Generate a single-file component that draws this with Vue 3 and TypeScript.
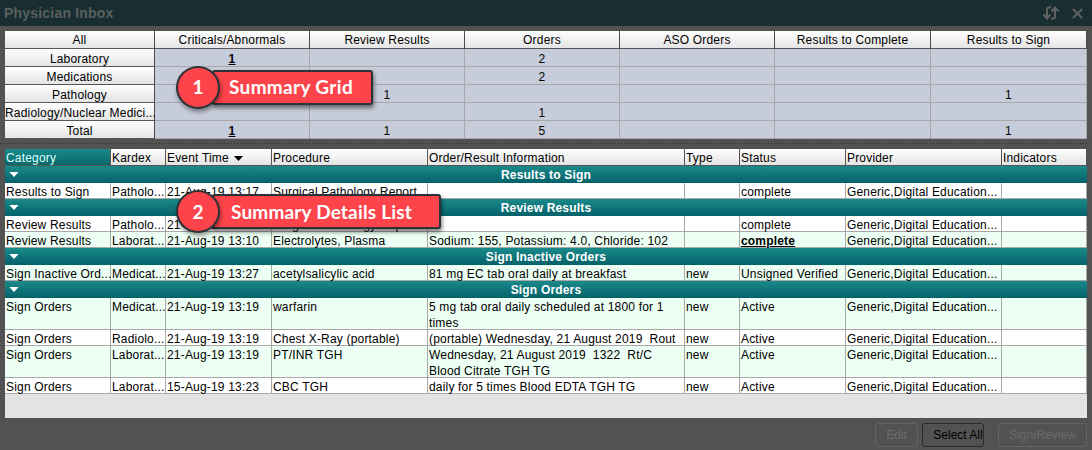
<script setup lang="ts">
interface Cell { text: string; strong?: boolean }
const summaryCols = ['Criticals/Abnormals', 'Review Results', 'Orders', 'ASO Orders', 'Results to Complete', 'Results to Sign']
const summaryRows: { label: string; cells: Cell[] }[] = [
  { label: 'Laboratory', cells: [{ text: '1', strong: true }, { text: '' }, { text: '2' }, { text: '' }, { text: '' }, { text: '' }] },
  { label: 'Medications', cells: [{ text: '' }, { text: '' }, { text: '2' }, { text: '' }, { text: '' }, { text: '' }] },
  { label: 'Pathology', cells: [{ text: '' }, { text: '1' }, { text: '' }, { text: '' }, { text: '' }, { text: '1' }] },
  { label: 'Radiology/Nuclear Medici...', cells: [{ text: '' }, { text: '' }, { text: '1' }, { text: '' }, { text: '' }, { text: '' }] },
  { label: 'Total', cells: [{ text: '1', strong: true }, { text: '1' }, { text: '5' }, { text: '' }, { text: '' }, { text: '1' }] },
]
const listCols = ['Category', 'Kardex', 'Event Time', 'Procedure', 'Order/Result Information', 'Type', 'Status', 'Provider', 'Indicators']
const gen = 'Generic,Digital Education...'
interface Row { cells: string[]; tint?: boolean; tall?: boolean; boldStatus?: boolean }
const groups: { title: string; rows: Row[] }[] = [
  { title: 'Results to Sign', rows: [
    { cells: ['Results to Sign', 'Patholo...', '21-Aug-19 13:17', 'Surgical Pathology Report', '', '', 'complete', gen, ''] },
  ] },
  { title: 'Review Results', rows: [
    { cells: ['Review Results', 'Patholo...', '21-Aug-19 13:17', 'Surgical Pathology Report', '', '', 'complete', gen, ''] },
    { cells: ['Review Results', 'Laborat...', '21-Aug-19 13:10', 'Electrolytes, Plasma', 'Sodium: 155, Potassium: 4.0, Chloride: 102', '', 'complete', gen, ''], tint: true, boldStatus: true },
  ] },
  { title: 'Sign Inactive Orders', rows: [
    { cells: ['Sign Inactive Ord...', 'Medicat...', '21-Aug-19 13:27', 'acetylsalicylic acid', '81 mg EC tab oral daily at breakfast', 'new', 'Unsigned Verified', gen, ''], tint: true },
  ] },
  { title: 'Sign Orders', rows: [
    { cells: ['Sign Orders', 'Medicat...', '21-Aug-19 13:19', 'warfarin', '5 mg tab oral daily scheduled at 1800 for 1 times', 'new', 'Active', gen, ''], tint: true, tall: true },
    { cells: ['Sign Orders', 'Radiolo...', '21-Aug-19 13:19', 'Chest X-Ray (portable)', '(portable) Wednesday, 21 August 2019  Rout', 'new', 'Active', gen, ''] },
    { cells: ['Sign Orders', 'Laborat...', '21-Aug-19 13:19', 'PT/INR TGH', 'Wednesday, 21 August 2019  1322  Rt/C Blood Citrate TGH TG', 'new', 'Active', gen, ''], tint: true, tall: true },
    { cells: ['Sign Orders', 'Laborat...', '15-Aug-19 13:23', 'CBC TGH', 'daily for 5 times Blood EDTA TGH TG', 'new', 'Active', gen, ''] },
  ] },
]
</script>

<template>
  <div class="window">
    <header class="titlebar">
      <span class="title">Physician Inbox</span>
      <span class="win-icons">
        <svg width="16" height="14" viewBox="0 0 16 14" fill="none" stroke="#606262" stroke-width="2">
          <path d="M4 12V3Q4 1.5 5.5 1.5H8" />
          <path d="M0.5 8.5L4 12.5L7.5 8.5" />
          <path d="M12 2V11Q12 12.5 10.5 12.5H8" />
          <path d="M8.5 5.5L12 1.5L15.5 5.5" />
        </svg>
        <svg width="11" height="11" viewBox="0 0 12 12" stroke="#606262" stroke-width="2.2">
          <path d="M1 1L11 11M11 1L1 11" />
        </svg>
      </span>
    </header>

    <section class="summary">
      <div class="s-row s-head">
        <div class="s-btn">All</div>
        <div v-for="c in summaryCols" :key="c" class="s-btn">{{ c }}</div>
      </div>
      <div v-for="r in summaryRows" :key="r.label" class="s-row">
        <div class="s-btn">{{ r.label }}</div>
        <div v-for="(c, i) in r.cells" :key="i" class="s-cell" :class="{ strong: c.strong }">{{ c.text }}</div>
      </div>
    </section>

    <div class="splitter"></div>

    <section class="list">
      <div class="l-row l-head">
        <div v-for="(c, i) in listCols" :key="c" class="l-h" :class="{ active: i === 0 }">
          {{ c }}<svg v-if="i === 2" class="sort" width="9" height="5" viewBox="0 0 11 6"><path d="M0 0H11L5.5 6Z" fill="#000" /></svg>
        </div>
      </div>
      <template v-for="g in groups" :key="g.title">
        <div class="group">
          <svg class="caret" width="10" height="5" viewBox="0 0 11 6"><path d="M0 0H11L5.5 6Z" fill="#fff" /></svg>
          {{ g.title }}
        </div>
        <div v-for="(r, ri) in g.rows" :key="ri" class="l-row data" :class="{ tint: r.tint, tall: r.tall }">
          <div v-for="(c, ci) in r.cells" :key="ci" class="l-c" :class="{ bold: r.boldStatus && ci === 6 }">{{ c }}</div>
        </div>
      </template>
    </section>

    <footer class="actions">
      <button class="btn off edit">Edit</button>
      <button class="btn sel">Select All</button>
      <button class="btn off sign">Sign/Review</button>
    </footer>

    <div class="callout c1"><span class="num">1</span><span class="lab">Summary Grid</span></div>
    <div class="callout c2"><span class="num">2</span><span class="lab">Summary Details List</span></div>
  </div>
</template>

<style>
html, body { margin: 0; background: #525252; }
</style>

<style scoped>
.window {
  position: relative;
  width: 1092px;
  height: 450px;
  overflow: hidden;
  background: #525252;
  font: 12px/15px "Liberation Sans", Arial, sans-serif;
  color: #000;
  letter-spacing: 0.18px;
}
.titlebar {
  height: 26px;
  background: #192e30;
  display: flex;
  align-items: center;
  justify-content: space-between;
  padding: 0 9px 0 4px;
}
.title { font-size: 14px; font-weight: 700; color: #5a5f5f; letter-spacing: 0.2px; }
.win-icons { display: flex; align-items: center; gap: 13px; }

.summary { margin: 5px 5px 0; width: 1082px; }
.s-row {
  display: grid;
  grid-template-columns: 150px 155px 155px 155px 155px 156px 156px;
  grid-template-rows: 18px;
  height: 18px;
}
.s-btn {
  min-height: 0;
  background: linear-gradient(#ffffff, #e4e4e4);
  border-right: 1px solid #4a4a4a;
  border-bottom: 1px solid #555;
  text-align: center;
  line-height: 19px;
  white-space: nowrap;
  box-sizing: border-box;
}
.s-row:not(.s-head) .s-btn { line-height: 20px; }
.s-cell {
  min-height: 0;
  background: #c6ccd9;
  border-right: 1px solid #a8a8a8;
  border-bottom: 1px solid #a8a8a8;
  text-align: center;
  line-height: 20px;
  box-sizing: border-box;
}
.s-cell.strong { font-weight: 700; text-decoration: underline; }

.splitter {
  height: 9px;
  margin-top: 1px;
  background-image: repeating-linear-gradient(90deg, #2e2e2e 0 1px, transparent 1px 3px);
  background-size: 100% 1px;
  background-position: 0 3px;
  background-repeat: no-repeat;
}

.list {
  margin-left: 5px;
  width: 1082px;
  height: 269px;
  background: #e3e3e3;
}
.l-row {
  display: grid;
  grid-template-columns: 106px 55px 106px 156px 257px 55px 106px 156px 85px;
  grid-template-rows: minmax(0, 1fr);
}
.l-head { height: 17px; }
.l-h {
  min-height: 0;
  background: linear-gradient(#ffffff, #e4e4e4);
  border-right: 1px solid #555;
  border-bottom: 1px solid #555;
  padding-left: 1px;
  line-height: 18px;
  white-space: nowrap;
  box-sizing: border-box;
}
.l-h.active { background: linear-gradient(#1a8a8a, #05686a); color: #dff; }
.sort { margin-left: 5px; vertical-align: 1px; }
.group {
  position: relative;
  height: 17px;
  background: linear-gradient(#1a8a8a, #05616a);
  color: #fff;
  font-weight: 700;
  text-align: center;
  line-height: 19px;
}
.caret { position: absolute; left: 4px; top: 6px; }
.data { background: #fff; height: 16px; }
.data.tint { background: #edfff4; }
.data.tall { height: 32px; }
.l-c {
  min-height: 0;
  border-right: 1px solid #a8a8a8;
  border-bottom: 1px solid #a8a8a8;
  padding: 1px 1px 0;
  line-height: 16px;
  box-sizing: border-box;
  white-space: pre;
}
.tall .l-c { white-space: pre-wrap; }
.l-c.bold { font-weight: 700; text-decoration: underline; }

.actions {
  display: flex;
  justify-content: flex-end;
  margin: 5px 5px 0 0;
  gap: 4px;
}
.btn {
  height: 24px;
  border: 1px solid #2a2a2a;
  border-radius: 3px;
  background: #525252;
  font: 12px "Liberation Sans", Arial, sans-serif;
  color: #000;
  padding: 0;
}
.btn.off { border-color: #646464; color: #6b6b6b; }
.edit { width: 43px; }
.sel { width: 62px; margin-right: 10px; padding-left: 10px; }
.sign { width: 89px; }

.callout {
  position: absolute;
  display: flex;
  align-items: center;
  background: #fd444b;
  border: 2px solid #2c3236;
  border-radius: 3px;
  color: #fff;
  font-family: Lato, sans-serif;
  font-weight: 700;
  font-size: 19px;
  box-shadow: 1px 3px 4px rgba(0, 0, 0, 0.5);
  box-sizing: border-box;
}
.c1 { left: 212px; top: 70px; width: 161px; height: 35px; }
.c2 { left: 212px; top: 194px; width: 229px; height: 35px; }
.num {
  position: absolute;
  left: -38px;
  top: 50%;
  width: 44px;
  height: 43px;
  margin-top: -21.5px;
  border-radius: 50%;
  background: #fd444b;
  border: 2px solid #2c3236;
  box-sizing: border-box;
  text-align: center;
  line-height: 39px;
  box-shadow: 1px 3px 4px rgba(0, 0, 0, 0.4);
}
.c1 .num { line-height: 37px; }
.lab { margin-left: 15px; white-space: nowrap; }
.c1 .lab { margin-top: -2px; letter-spacing: 0.33px; }
.c2 .lab { margin-left: 17px; }
</style>
